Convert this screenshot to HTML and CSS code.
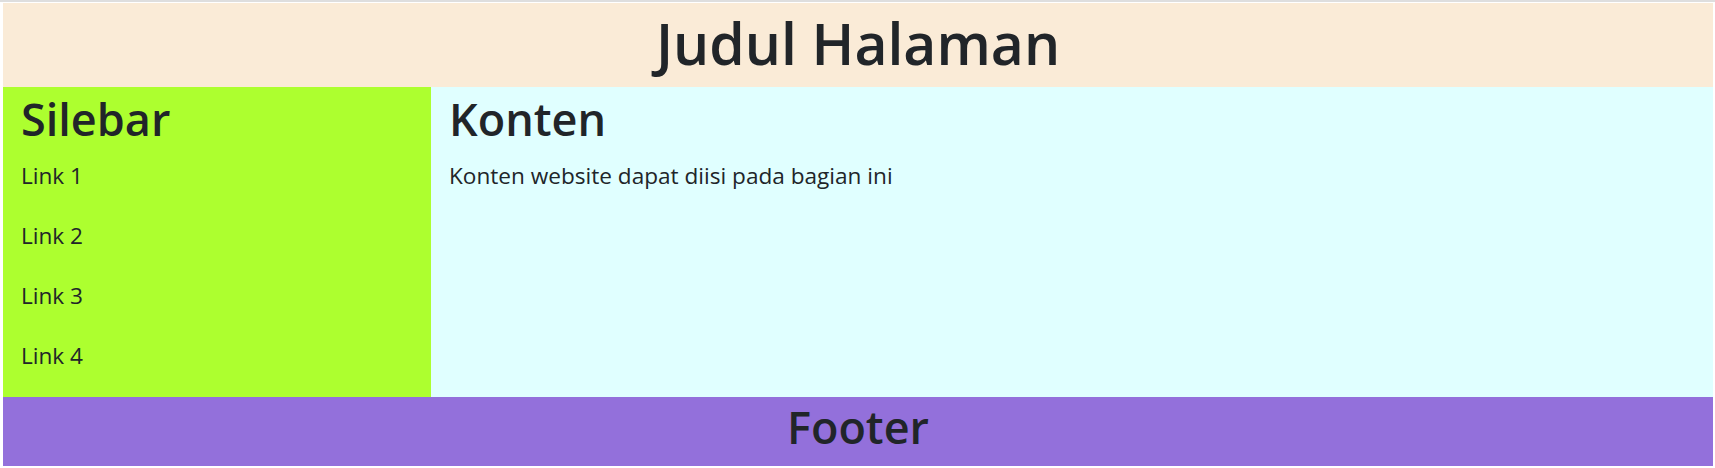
FILE: index.html
```html
<!DOCTYPE html>
<html lang="id">
<head>
<meta charset="utf-8">
<title>Judul Halaman</title>
<link rel="stylesheet" href="styles.css">
</head>
<body>
<div class="page">
  <header class="header"><h1 class="title">Judul Halaman</h1></header>
  <div class="main">
    <aside class="sidebar">
      <h2 class="heading">Silebar</h2>
      <ul class="links">
        <li class="link">Link 1</li>
        <li class="link">Link 2</li>
        <li class="link">Link 3</li>
        <li class="link">Link 4</li>
      </ul>
    </aside>
    <section class="content">
      <h2 class="heading">Konten</h2>
      <p class="text">Konten website dapat diisi pada bagian ini</p>
    </section>
  </div>
  <footer class="footer"><h2 class="footer-title">Footer</h2></footer>
</div>
</body>
</html>
```
FILE: styles.css
```css
html, body {
  margin: 0;
  padding: 0;
  background: #ffffff;
}
body {
  border-top: 2px solid #dedede;
  font-family: "Open Sans", "Noto Sans", sans-serif;
  color: #212529;
}
.page {
  display: flex;
  flex-direction: column;
  padding: 1px 2px 2px 3px;
}
.header {
  background: #faebd7;
  height: 84px;
  display: flex;
  justify-content: center;
}
.title {
  margin: 0;
  font-size: 57px;
  font-weight: 600;
  line-height: 80px;
}
.main {
  display: flex;
  height: 310px;
}
.sidebar {
  width: 428px;
  background: #adff2f;
  padding: 5px 18px 0;
  box-sizing: border-box;
}
.content {
  flex: 1;
  background: #e0ffff;
  padding: 5px 18px 0;
}
.heading {
  margin: 0;
  font-size: 45px;
  font-weight: 600;
  line-height: 53px;
}
.links {
  list-style: none;
  margin: 1px 0 0;
  padding: 0;
}
.link {
  font-size: 22.6px;
  line-height: 60px;
  height: 60px;
}
.text {
  margin: 1px 0 0;
  font-size: 22.6px;
  line-height: 60px;
}
.footer {
  background: #9370db;
  height: 69px;
  display: flex;
  justify-content: center;
}
.footer-title {
  margin: 0;
  font-size: 45px;
  font-weight: 600;
  line-height: 60px;
}
```
